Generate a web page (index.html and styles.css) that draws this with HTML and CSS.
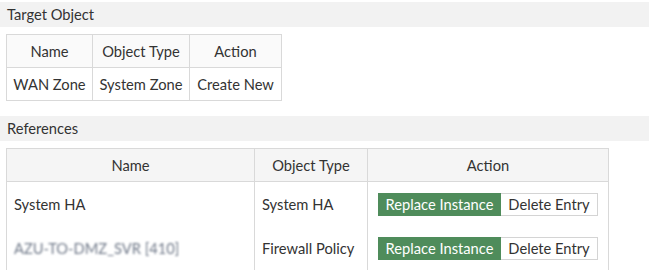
FILE: index.html
```html
<!DOCTYPE html>
<html lang="en">
<head>
<meta charset="UTF-8" />
<title>Object References</title>
<link rel="stylesheet" href="styles.css">
</head>
<body>
<div class="section-bar first">Target Object</div>
<table class="grid target">
    <colgroup>
        <col style="width:86px">
        <col style="width:97px">
        <col style="width:92px">
    </colgroup>
    <thead>
        <tr><th>Name</th><th>Object Type</th><th>Action</th></tr>
    </thead>
    <tbody>
        <tr><td>WAN Zone</td><td>System Zone</td><td>Create New</td></tr>
    </tbody>
</table>

<div class="section-bar">References</div>
<table class="grid refs">
    <colgroup>
        <col style="width:248px">
        <col style="width:113px">
        <col style="width:241px">
    </colgroup>
    <thead>
        <tr><th>Name</th><th>Object Type</th><th>Action</th></tr>
    </thead>
    <tbody>
        <tr>
            <td>System HA</td>
            <td>System HA</td>
            <td>
                <div class="btn-group">
                    <button class="btn btn-primary">Replace Instance</button><button class="btn">Delete Entry</button>
                </div>
            </td>
        </tr>
        <tr>
            <td><span class="masked">AZU-TO-DMZ_SVR [410]</span></td>
            <td>Firewall Policy</td>
            <td>
                <div class="btn-group">
                    <button class="btn btn-primary">Replace Instance</button><button class="btn">Delete Entry</button>
                </div>
            </td>
        </tr>
    </tbody>
</table>
</body>
</html>
```
FILE: styles.css
```css
body {
    margin: 0;
    font-family: Lato, 'Liberation Sans', sans-serif;
    font-size: 14.7px;
    color: #333;
    background: #fff;
}
.section-bar {
    background: #f2f2f2;
    height: 25px;
    line-height: 25px;
    padding-left: 7px;
    margin-top: 15px;
}
.section-bar.first {
    margin-top: 2px;
}
.grid {
    border-collapse: collapse;
    table-layout: fixed;
    margin: 7px 0 0 6px;
}
.grid th, .grid td {
    border-left: 1px solid #d9d9d9;
    border-right: 1px solid #d9d9d9;
    font-weight: 400;
    padding: 0;
}
.grid th {
    background: #f5f5f5;
    border-top: 1px solid #d9d9d9;
    border-bottom: 1px solid #d9d9d9;
    height: 32px;
}
.target td {
    text-align: center;
    height: 32px;
    border-bottom: 1px solid #d9d9d9;
}
.target th {
    background: #fafafa;
}
.refs td {
    height: 44px;
    padding-left: 7px;
}
.refs td:last-child {
    padding-left: 10px;
}
.masked {
    color: #6f7888;
    filter: blur(1px);
}
.btn-group {
    display: flex;
}
.btn {
    font-family: inherit;
    font-size: 14.7px;
    color: #333;
    background: #fff;
    border: 1px solid #d4d4d4;
    border-left: none;
    height: 23px;
    width: 97px;
    padding: 0;
    margin: 0;
    cursor: pointer;
}
.btn-primary {
    background: #4f8c5b;
    border-color: #4f8c5b;
    border-left: 1px solid #4f8c5b;
    color: #fff;
    width: 123px;
}
```
